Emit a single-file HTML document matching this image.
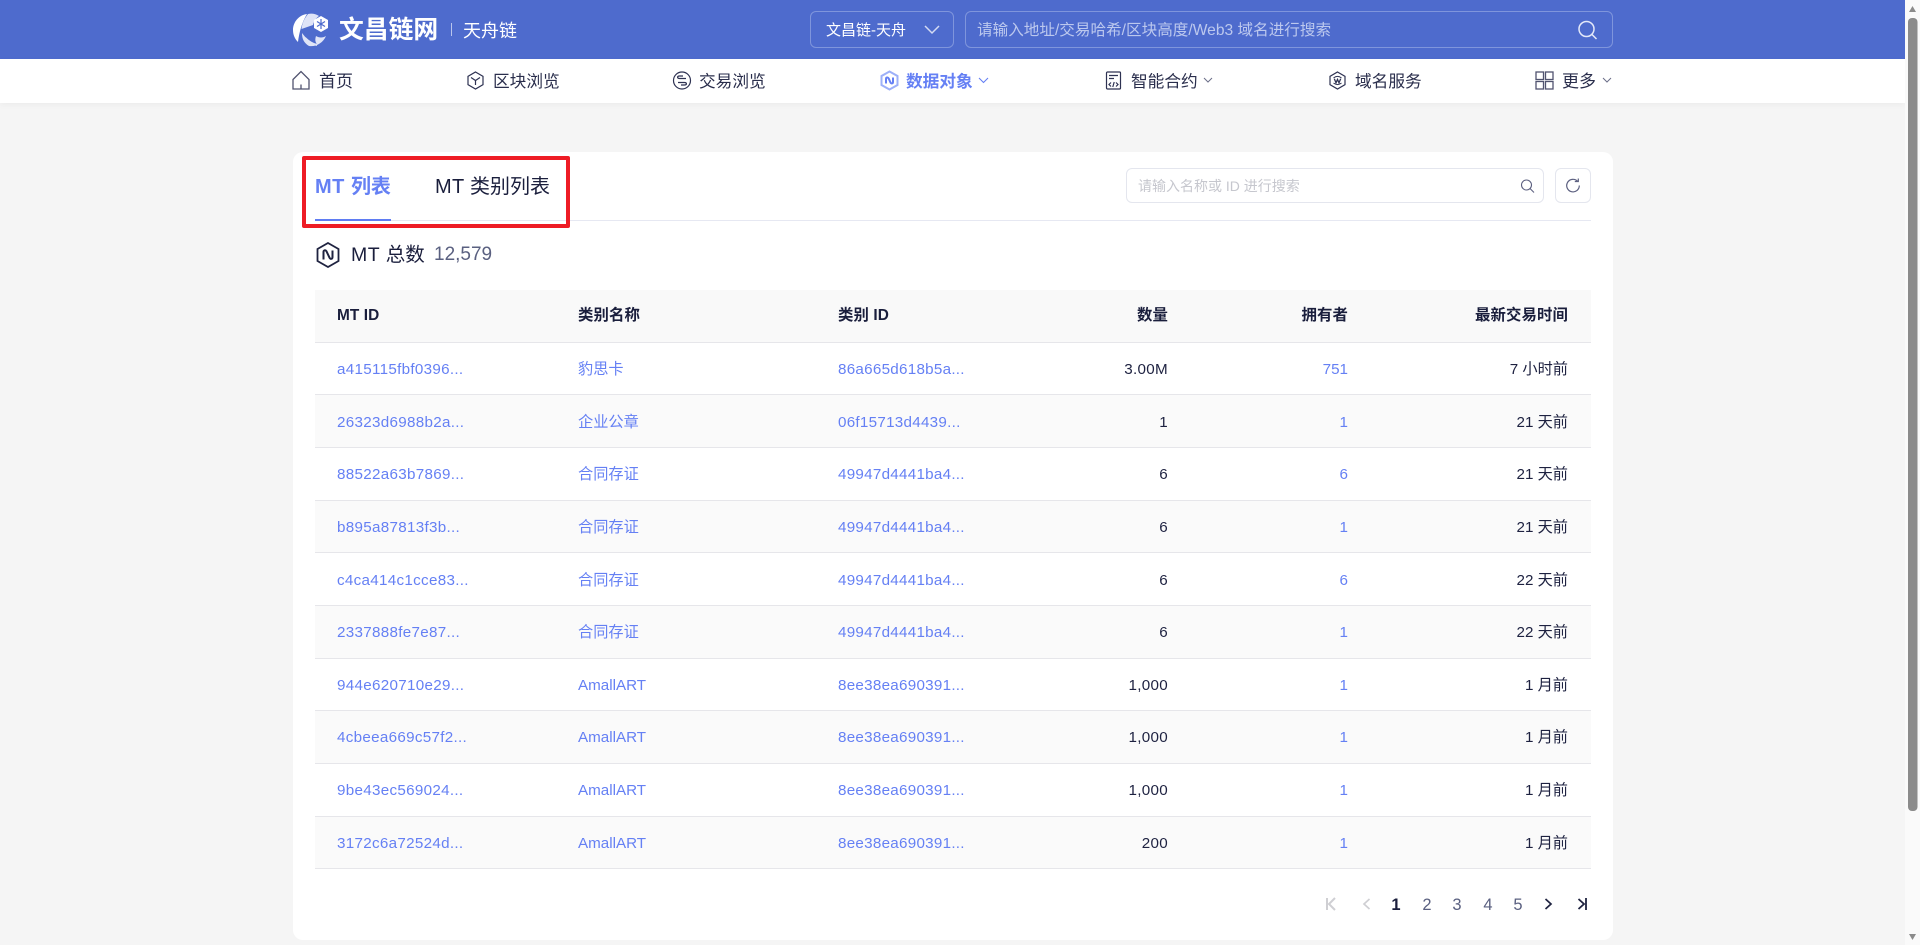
<!DOCTYPE html>
<html lang="zh"><head><meta charset="utf-8"><title>MT 列表</title>
<style>
*{box-sizing:border-box;margin:0;padding:0}
html,body{width:1920px;height:945px;overflow:hidden;background:#f5f5f5;font-family:"Liberation Sans","Noto Sans CJK SC",sans-serif;color:#1d2140}
.a{position:absolute;white-space:nowrap}
svg{position:absolute;display:block;fill:none}
.t{position:absolute;white-space:nowrap;line-height:24px;height:24px}
.nav{font-size:16.7px;color:#2a2e4c;top:70px}
.row{position:absolute;left:315px;width:1276px;border-bottom:1px solid #e6e6ea}
.row.s{background:#fafafa}
.c{position:absolute;top:50%;margin-top:-11px;line-height:24px;font-size:15.200px;white-space:nowrap}
.n .c{margin-top:-10.500px}
.b{color:#6580f4}
.c1{left:22px;letter-spacing:.3px}.c2{left:263px}.c3{left:523px;letter-spacing:.27px}
.c4{right:423px;letter-spacing:.3px}.c5{right:243px}.c6{right:23px}
.th{font-weight:700;color:#1a1e3c;font-size:15.400px;letter-spacing:.1px;margin-top:-12px}
.pg{position:absolute;top:893px;line-height:24px;font-size:16.500px;color:#5a6080;width:20px;text-align:center}
</style></head><body>

<div class="a" style="left:0;top:0;width:1905px;height:59px;background:#4e6bcd"></div>
<div class="a" style="left:0;top:59px;width:1905px;height:44px;background:#fff;box-shadow:0 2px 6px rgba(0,0,0,.04)"></div>

<!-- logo -->
<svg style="left:293px;top:13px" width="36" height="34" viewBox="0 0 36 34">
<path d="M14 1C6 2 0 9 0 17c0 5 2 9 5 12 1-9 4-20 9-28z" fill="#fff"/>
<path d="M15 1c-4 5-6 10-6.500 15L20 12c1-4 3-7 6-9-3-2-7-3-11-2z" fill="#dfe4f7"/>
<path d="M9 20c0 6 2 10 7 13 7 1 14-3 17-10-3 2-7 2-10 0-1 3-1 6 1 8-7-1-11-6-15-11z" fill="#dfe4f7"/>
<path d="M12 25c3 3 7 6 12 7" stroke="#dfe4f7" stroke-width="2"/>
<path d="M28 3l7 4v8l-7 4-7-4V7z" fill="#fff"/>
<path d="M28 6v10M24 8.500l8 5M32 8.500l-8 5" stroke="#4e6bcd" stroke-width="1.200"/>
</svg>
<div class="t" style="left:339px;top:19px;font-size:24.800px;font-weight:700;color:#fff">文昌链网</div>
<div class="a" style="left:451px;top:23px;width:1px;height:13px;background:#b9c5ec"></div>
<div class="t" style="left:463px;top:19px;font-size:18px;color:#fff">天舟链</div>

<!-- chain select -->
<div class="a" style="left:810px;top:11px;width:144px;height:37px;border:1px solid #7f95dc;border-radius:6px"></div>
<div class="t" style="left:826px;top:19px;font-size:15px;color:#fff">文昌链-天舟</div>
<svg style="left:923px;top:24px" width="18" height="11" viewBox="0 0 18 11"><path d="M2 2l7 7 7-7" stroke="#d4dbf3" stroke-width="1.500"/></svg>

<!-- top search -->
<div class="a" style="left:965px;top:11px;width:648px;height:37px;border:1px solid #7f95dc;border-radius:6px"></div>
<div class="t" style="left:977px;top:19px;font-size:15.600px;color:#bcc8ee">请输入地址/交易哈希/区块高度/Web3 域名进行搜索</div>
<svg style="left:1577px;top:20px" width="21" height="20" viewBox="0 0 21 20"><circle cx="9.500" cy="9" r="7.500" stroke="#e4e9f9" stroke-width="1.500"/><path d="M15 14.500l4.500 4.500" stroke="#e4e9f9" stroke-width="1.500"/></svg>

<!-- nav -->
<svg style="left:291px;top:70px" width="20" height="20" viewBox="0 0 20 20" stroke="#50536f" stroke-width="1.300"><path d="M2 9.500L10 1.500l8 8V19H2zM10 14.500V19"/></svg>
<div class="t nav" style="left:319px;font-size:17px">首页</div>

<svg style="left:466px;top:71px" width="19" height="19" viewBox="0 0 19 19" stroke="#2e3252" stroke-width="1.200"><path d="M9.500 1l7.500 4.300v8.400L9.500 18 2 13.700V5.300zM5 6.500l4.500 3 4.500-3M9.500 9.500V14"/></svg>
<div class="t nav" style="left:493px">区块浏览</div>

<svg style="left:672px;top:71px" width="20" height="19" viewBox="0 0 20 19" stroke="#2e3252" stroke-width="1.200"><circle cx="10" cy="9.500" r="8.500"/><path d="M14 7.500H7.500C5 7.500 5 5 7.500 5H11M6 11.500h6.500c2.500 0 2.500 2.500 0 2.500H9" stroke-width="1.300"/></svg>
<div class="t nav" style="left:699px">交易浏览</div>

<svg style="left:879px;top:70px" width="21" height="21" viewBox="0 0 21 21" stroke="#6580f4" stroke-width="2"><path d="M10.500 1.500l8 4.500v9l-8 4.500-8-4.500V6z" stroke="#9db0f8"/><path d="M7 13.500V9c0-1.800 1.800-2 2.700-.5l1.800 4c.8 1.500 2.500 1.200 2.500-.5V7.500"/></svg>
<div class="t nav" style="left:906px;font-weight:700;color:#6580f4">数据对象</div>
<svg style="left:978px;top:77px" width="11" height="7" viewBox="0 0 11 7"><path d="M1 1l4.500 4.500L10 1" stroke="#6580f4" stroke-width="1.100"/></svg>

<svg style="left:1105px;top:71px" width="17" height="19" viewBox="0 0 17 19" stroke="#2e3252" stroke-width="1.200"><rect x="1.500" y="1" width="14" height="17" rx="1"/><path d="M4 4.500h9M4 7.500h5M6 11.500l-2 2 2 2M11 11.500l2 2-2 2M9.200 11l-1.400 5"/></svg>
<div class="t nav" style="left:1131px">智能合约</div>
<svg style="left:1203px;top:77px" width="10" height="7" viewBox="0 0 10 7"><path d="M1 1l4 4 4-4" stroke="#6b6e88" stroke-width="1"/></svg>

<svg style="left:1328px;top:71px" width="19" height="19" viewBox="0 0 19 19" stroke="#2e3252" stroke-width="1.200"><path d="M9.500 1l7.500 4.300v8.400L9.500 18 2 13.700V5.300z"/><path d="M5.500 7c2.500-2 5.500-2 8 0M5.500 12c2.500 2 5.500 2 8 0" stroke-width="1"/><path d="M6.300 7.800l1.700 4 1.500-3.300 1.500 3.300 1.700-4" stroke-width="1.300"/></svg>
<div class="t nav" style="left:1355px">域名服务</div>

<svg style="left:1535px;top:71px" width="19" height="19" viewBox="0 0 19 19" stroke="#50536f" stroke-width="1.300"><rect x="1" y="1" width="7.500" height="7.500"/><rect x="10.500" y="1" width="7.500" height="7.500"/><rect x="1" y="10.500" width="7.500" height="7.500"/><rect x="10.500" y="10.500" width="7.500" height="7.500"/></svg>
<div class="t nav" style="left:1562px;font-size:17px">更多</div>
<svg style="left:1602px;top:77px" width="10" height="7" viewBox="0 0 10 7"><path d="M1 1l4 4 4-4" stroke="#6b6e88" stroke-width="1"/></svg>

<!-- card -->
<div class="a" style="left:293px;top:152px;width:1320px;height:788px;background:#fff;border-radius:10px"></div>

<!-- tabs -->
<div class="t" style="left:315px;top:175px;font-size:20px;font-weight:700;color:#6580f4"><span style="letter-spacing:.5px">MT </span>列表</div>
<div class="t" style="left:435px;top:175px;font-size:20px;color:#1a1e3c"><span style="letter-spacing:.3px">MT </span>类别列表</div>
<div class="a" style="left:315px;top:220px;width:1276px;height:1px;background:#e6e8f2"></div>
<div class="a" style="left:315px;top:219px;width:76px;height:2px;background:#5f7cf3"></div>
<div class="a" style="left:302px;top:156px;width:268px;height:72px;border:4px solid #ee1c25;border-radius:2px"></div>

<!-- card search -->
<div class="a" style="left:1126px;top:168px;width:418px;height:35px;border:1px solid #e4e6ee;border-radius:6px"></div>
<div class="t" style="left:1138px;top:174px;font-size:14px;color:#c6c7ce">请输入名称或 ID 进行搜索</div>
<svg style="left:1520px;top:179px" width="15" height="14" viewBox="0 0 15 14"><circle cx="6.500" cy="6" r="5" stroke="#5c6080" stroke-width="1.100"/><path d="M10 9.500l4 4" stroke="#5c6080" stroke-width="1.100"/></svg>
<div class="a" style="left:1555px;top:168px;width:36px;height:35px;border:1px solid #e4e6ee;border-radius:6px"></div>
<svg style="left:1565px;top:178px" width="16" height="15" viewBox="0 0 16 15"><path d="M12.500 3.200A6.300 6.300 0 1 0 14.300 7.500" stroke="#5c6080" stroke-width="1.200"/><path d="M9.800 3.500h3.500V.5" stroke="#5c6080" stroke-width="1.200" fill="none"/></svg>

<!-- total -->
<svg style="left:316px;top:242px" width="24" height="26" viewBox="0 0 24 26" stroke="#1f2340" stroke-width="1.800"><path d="M12 1l10.500 6v12L12 25 1.500 19V7z"/><path d="M7.500 17.500V10c0-2 2-2.300 3-.7l3 6.400c1 1.800 3 1.400 3-.7V8.500" stroke-width="2"/></svg>
<div class="t" style="left:351px;top:243px;font-size:19.500px;color:#1a1e3c"><span style="letter-spacing:.5px">MT </span>总数</div>
<div class="t" style="left:434px;top:243px;font-size:19px;color:#5a6080">12,579</div>

<!-- table -->
<div class="row" style="top:290px;height:53px;background:#f9f9f9">
<span class="c c1 th">MT ID</span><span class="c c2 th">类别名称</span><span class="c c3 th">类别 ID</span><span class="c c4 th">数量</span><span class="c c5 th">拥有者</span><span class="c c6 th">最新交易时间</span>
</div>

<div class="row" style="top:343px;height:52px"><span class="c c1 b">a415115fbf0396...</span><span class="c c2 b">豹思卡</span><span class="c c3 b">86a665d618b5a...</span><span class="c c4">3.00M</span><span class="c c5 b">751</span><span class="c c6">7 小时前</span></div>
<div class="row s n" style="top:395px;height:53px"><span class="c c1 b">26323d6988b2a...</span><span class="c c2 b">企业公章</span><span class="c c3 b">06f15713d4439...</span><span class="c c4">1</span><span class="c c5 b">1</span><span class="c c6">21 天前</span></div>
<div class="row" style="top:448px;height:53px"><span class="c c1 b">88522a63b7869...</span><span class="c c2 b">合同存证</span><span class="c c3 b">49947d4441ba4...</span><span class="c c4">6</span><span class="c c5 b">6</span><span class="c c6">21 天前</span></div>
<div class="row s" style="top:501px;height:52px"><span class="c c1 b">b895a87813f3b...</span><span class="c c2 b">合同存证</span><span class="c c3 b">49947d4441ba4...</span><span class="c c4">6</span><span class="c c5 b">1</span><span class="c c6">21 天前</span></div>
<div class="row n" style="top:553px;height:53px"><span class="c c1 b">c4ca414c1cce83...</span><span class="c c2 b">合同存证</span><span class="c c3 b">49947d4441ba4...</span><span class="c c4">6</span><span class="c c5 b">6</span><span class="c c6">22 天前</span></div>
<div class="row s" style="top:606px;height:53px"><span class="c c1 b">2337888fe7e87...</span><span class="c c2 b">合同存证</span><span class="c c3 b">49947d4441ba4...</span><span class="c c4">6</span><span class="c c5 b">1</span><span class="c c6">22 天前</span></div>
<div class="row" style="top:659px;height:52px"><span class="c c1 b">944e620710e29...</span><span class="c c2 b">AmallART</span><span class="c c3 b">8ee38ea690391...</span><span class="c c4">1,000</span><span class="c c5 b">1</span><span class="c c6">1 月前</span></div>
<div class="row s" style="top:711px;height:53px"><span class="c c1 b">4cbeea669c57f2...</span><span class="c c2 b">AmallART</span><span class="c c3 b">8ee38ea690391...</span><span class="c c4">1,000</span><span class="c c5 b">1</span><span class="c c6">1 月前</span></div>
<div class="row" style="top:764px;height:53px"><span class="c c1 b">9be43ec569024...</span><span class="c c2 b">AmallART</span><span class="c c3 b">8ee38ea690391...</span><span class="c c4">1,000</span><span class="c c5 b">1</span><span class="c c6">1 月前</span></div>
<div class="row s" style="top:817px;height:52px"><span class="c c1 b">3172c6a72524d...</span><span class="c c2 b">AmallART</span><span class="c c3 b">8ee38ea690391...</span><span class="c c4">200</span><span class="c c5 b">1</span><span class="c c6">1 月前</span></div>

<!-- pagination -->
<svg style="left:1325px;top:897px" width="12" height="14" viewBox="0 0 12 14"><path d="M2 1v12M10 1L4 7l6 6" stroke="#cfcfd3" stroke-width="2"/></svg>
<svg style="left:1361px;top:897px" width="10" height="14" viewBox="0 0 10 14"><path d="M8.500 2L3 7l5.500 5" stroke="#cfcfd3" stroke-width="1.700"/></svg>
<div class="pg" style="left:1386px;font-weight:700;color:#1a1e3c">1</div>
<div class="pg" style="left:1417px">2</div>
<div class="pg" style="left:1447px">3</div>
<div class="pg" style="left:1478px">4</div>
<div class="pg" style="left:1508px">5</div>
<svg style="left:1544px;top:897px" width="10" height="14" viewBox="0 0 10 14"><path d="M1.500 2L7 7l-5.500 5" stroke="#1f2340" stroke-width="1.700"/></svg>
<svg style="left:1577px;top:897px" width="12" height="14" viewBox="0 0 12 14"><path d="M1.500 2L7 7l-5.500 5M9 1v12" stroke="#1f2340" stroke-width="1.800"/></svg>

<!-- scrollbar -->
<div class="a" style="left:1905px;top:0;width:15px;height:945px;background:#fafafa"></div>
<svg style="left:1905px;top:0" width="15" height="945"><path d="M4 12l3.500-6 3.500 6z" fill="#8b8b8b"/><path d="M4 934l3.500 6 3.500-6z" fill="#8b8b8b"/><rect x="3" y="18" width="9.500" height="793" rx="4" fill="#8b8b8b"/></svg>
</body></html>
